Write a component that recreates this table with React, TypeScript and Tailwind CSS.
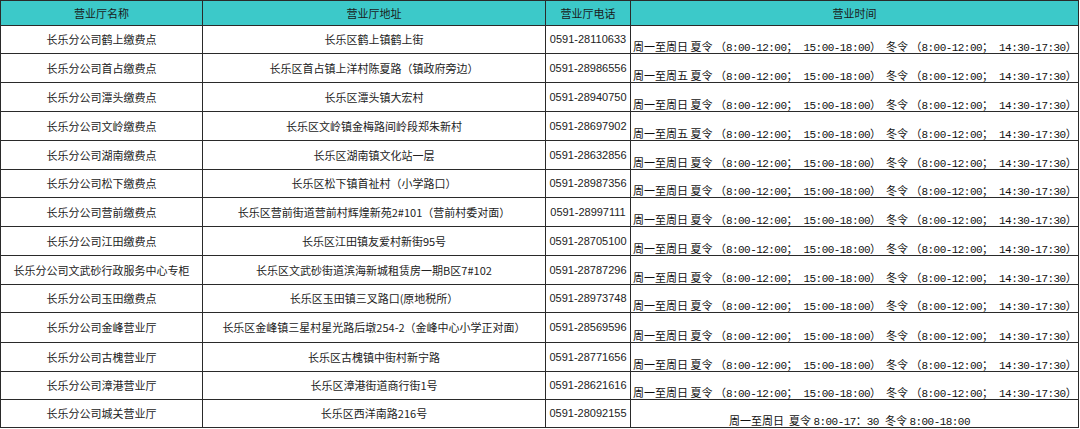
import React from "react";

type Row = { name: string; addr: string; phone: string; days?: string; last?: boolean; h: number };

const rows: Row[] = [
  { name: "长乐分公司鹤上缴费点", addr: "长乐区鹤上镇鹤上街", phone: "0591-28110633", days: "周一至周日", h: 28 },
  { name: "长乐分公司首占缴费点", addr: "长乐区首占镇上洋村陈夏路（镇政府旁边）", phone: "0591-28986556", days: "周一至周五", h: 29 },
  { name: "长乐分公司潭头缴费点", addr: "长乐区潭头镇大宏村", phone: "0591-28940750", days: "周一至周日", h: 29 },
  { name: "长乐分公司文岭缴费点", addr: "长乐区文岭镇金梅路间岭段郑朱新村", phone: "0591-28697902", days: "周一至周五", h: 29 },
  { name: "长乐分公司湖南缴费点", addr: "长乐区湖南镇文化站一层", phone: "0591-28632856", days: "周一至周日", h: 29 },
  { name: "长乐分公司松下缴费点", addr: "长乐区松下镇首祉村（小学路口）", phone: "0591-28987356", days: "周一至周日", h: 28 },
  { name: "长乐分公司营前缴费点", addr: "长乐区营前街道营前村辉煌新苑2#101（营前村委对面）", phone: "0591-28997111", days: "周一至周日", h: 29 },
  { name: "长乐分公司江田缴费点", addr: "长乐区江田镇友爱村新街95号", phone: "0591-28705100", days: "周一至周日", h: 29 },
  { name: "长乐分公司文武砂行政服务中心专柜", addr: "长乐区文武砂街道滨海新城租赁房一期B区7#102", phone: "0591-28787296", days: "周一至周日", h: 29 },
  { name: "长乐分公司玉田缴费点", addr: "长乐区玉田镇三叉路口(原地税所）", phone: "0591-28973748", days: "周一至周日", h: 28 },
  { name: "长乐分公司金峰营业厅", addr: "长乐区金峰镇三星村星光路后墩254-2（金峰中心小学正对面）", phone: "0591-28569596", days: "周一至周日", h: 30 },
  { name: "长乐分公司古槐营业厅", addr: "长乐区古槐镇中街村新宁路", phone: "0591-28771656", days: "周一至周日", h: 29 },
  { name: "长乐分公司漳港营业厅", addr: "长乐区漳港街道商行街1号", phone: "0591-28621616", days: "周一至周日", h: 28 },
  { name: "长乐分公司城关营业厅", addr: "长乐区西洋南路216号", phone: "0591-28092155", last: true, h: 28 },
];

const CJK = "font-['Noto_Sans_CJK_SC',sans-serif]";
const Mono = ({ children }: { children: React.ReactNode }) => (
  <span className="font-['Liberation_Mono','Noto_Sans_CJK_SC',monospace] text-[11px] tracking-[-0.55px]">{children}</span>
);

function Hours({ days }: { days: string }) {
  return (
    <span className="whitespace-pre text-[11px] text-[#111]">
      <span className={CJK}>{days} 夏令 （</span>
      <Mono>8:00-12:00</Mono>
      <span className={CJK}>；</span>
      <Mono> 15:00-18:00</Mono>
      <span className={CJK}>）  冬令 （</span>
      <Mono>8:00-12:00</Mono>
      <span className={CJK}>；</span>
      <Mono> 14:30-17:30</Mono>
      <span className={CJK}>）</span>
    </span>
  );
}

function LastHours() {
  return (
    <span className="whitespace-pre text-[11px] text-[#111]">
      <span className={CJK}>周一至周日  夏令 </span>
      <Mono>8:00-17</Mono>
      <span className={CJK}>：</span>
      <Mono>30 </Mono>
      <span className={CJK}>冬令 </span>
      <Mono>8:00-18:00</Mono>
    </span>
  );
}

const cell = "border border-[#2a2a2a] p-0";

export default function App() {
  return (
    <div className="w-[1080px] h-[429px] bg-white overflow-hidden">
      <table className="border-collapse table-fixed w-[1078px] text-[11px] text-[#222]">
        <colgroup>
          <col className="w-[202px]" />
          <col className="w-[343px]" />
          <col className="w-[85px]" />
          <col className="w-[448px]" />
        </colgroup>
        <thead>
          <tr className="h-[25px] bg-[#3cc9c9]">
            {["营业厅名称", "营业厅地址", "营业厅电话", "营业时间"].map((t) => (
              <th key={t} className={`${cell} ${CJK} font-normal text-center align-middle leading-none text-[#1a1a1a]`}>
                {t}
              </th>
            ))}
          </tr>
        </thead>
        <tbody>
          {rows.map((r) => (
            <tr key={r.name} style={{ height: r.h }}>
              <td className={`${cell} ${CJK} text-center align-middle leading-none whitespace-nowrap`}>{r.name}</td>
              <td className={`${cell} ${CJK} text-center align-middle leading-none whitespace-nowrap`}>{r.addr}</td>
              <td className={`${cell} font-['Liberation_Sans',sans-serif] text-center align-middle leading-none`}>{r.phone}</td>
              <td className={`${cell} align-bottom leading-[9px] ${r.last ? "text-center pr-[10px]" : "text-left pl-[2px]"}`}>
                <div>{r.last ? <LastHours /> : <Hours days={r.days!} />}</div>
              </td>
            </tr>
          ))}
        </tbody>
      </table>
    </div>
  );
}
